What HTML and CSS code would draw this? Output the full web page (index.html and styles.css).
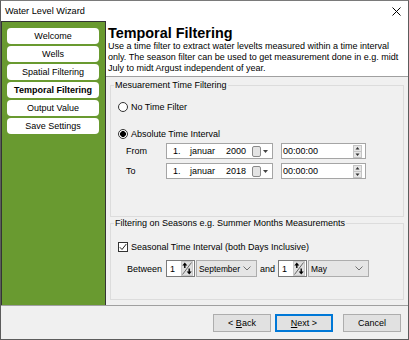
FILE: index.html
```html
<!DOCTYPE html>
<html lang="en">
<head>
    <meta charset="UTF-8">
    <title>Water Level Wizard</title>
    <link rel="stylesheet" href="styles.css">
</head>
<body>

    <div class="window">
        <div class="titlebar">
            <span>Water Level Wizard</span>
            <svg class="close" width="9" height="9" viewBox="0 0 9 9"><path d="M0.5 0.5L8.5 8.5M8.5 0.5L0.5 8.5" stroke="#000" stroke-width="1"/></svg>
        </div>

        <div class="main">
            <nav class="steps">
                <div class="step">Welcome</div>
                <div class="step">Wells</div>
                <div class="step">Spatial Filtering</div>
                <div class="step current">Temporal Filtering</div>
                <div class="step">Output Value</div>
                <div class="step">Save Settings</div>
            </nav>

            <section class="page">
                <header class="page-head">
                    <h1>Temporal Filtering</h1>
                    <p>Use a time filter to extract water levelts measured within a time interval<br>only. The season filter can be used to get measurement done in e.g. midt<br>July to midt Argust independent of year.</p>
                </header>

                <div class="page-body">
                    <fieldset class="group group-time">
                        <legend>Mesuarement Time Filtering</legend>
                        <div class="option first"><span class="radio"></span>No Time Filter</div>
                        <div class="option second"><span class="radio checked"></span>Absolute Time Interval</div>

                        <div class="range-row from">
                            <span class="row-label">From</span>
                            <div class="date-box">
                                <span class="d-day">1.</span><span class="d-month">januar</span><span class="d-year">2000</span>
                                <svg class="cal" width="16" height="11" viewBox="0 0 16 11"><rect x="0.5" y="0.5" width="8" height="10" rx="1.5" fill="#e4e4e4" stroke="#8a8a8a"/><path d="M11 4h5l-2.5 3z" fill="#444"/></svg>
                            </div>
                            <div class="time-box">
                                <span>00:00:00</span>
                                <svg class="spin" width="9" height="13" viewBox="0 0 9 13"><rect x="0.5" y="0.5" width="8" height="12" fill="#e6e6e6" stroke="#c4c4c4"/><path d="M0.5 6.5h8" stroke="#c4c4c4"/><path d="M2.5 4.5h4l-2-2.5z M2.5 8.5h4l-2 2.5z" fill="#333"/></svg>
                            </div>
                        </div>

                        <div class="range-row to">
                            <span class="row-label">To</span>
                            <div class="date-box">
                                <span class="d-day">1.</span><span class="d-month">januar</span><span class="d-year">2018</span>
                                <svg class="cal" width="16" height="11" viewBox="0 0 16 11"><rect x="0.5" y="0.5" width="8" height="10" rx="1.5" fill="#e4e4e4" stroke="#8a8a8a"/><path d="M11 4h5l-2.5 3z" fill="#444"/></svg>
                            </div>
                            <div class="time-box">
                                <span>00:00:00</span>
                                <svg class="spin" width="9" height="13" viewBox="0 0 9 13"><rect x="0.5" y="0.5" width="8" height="12" fill="#e6e6e6" stroke="#c4c4c4"/><path d="M0.5 6.5h8" stroke="#c4c4c4"/><path d="M2.5 4.5h4l-2-2.5z M2.5 8.5h4l-2 2.5z" fill="#333"/></svg>
                            </div>
                        </div>
                    </fieldset>

                    <fieldset class="group group-season">
                        <legend>Filtering on Seasons e.g. Summer Months Measurements</legend>
                        <div class="option check-row">
                            <span class="checkbox"><svg width="8" height="8" viewBox="0 0 8 8"><path d="M0.8 4.2L3 6.5L7.3 1" fill="none" stroke="#222" stroke-width="1"/></svg></span>Seasonal Time Interval (both Days Inclusive)
                        </div>
                        <div class="between-row">
                            <span class="row-label">Between</span>
                            <div class="num-box">
                                <span>1</span>
                                <svg width="12" height="15" viewBox="0 0 12 15"><rect x="0.5" y="0.5" width="11" height="14" fill="#dedede" stroke="#c8c8c8"/><path d="M1.5 13.5L10.5 1.5" stroke="#6a6a6a"/><path d="M1.3 4.5L3.8 1.5L6.3 4.5z" fill="#000"/><path d="M3.8 3.5v3.5" stroke="#000" stroke-width="1.4"/><path d="M5.7 10.5L8.2 13.5L10.7 10.5z" fill="#000"/><path d="M8.2 7.5v3.5" stroke="#000" stroke-width="1.4"/></svg>
                            </div>
                            <div class="combo wide">
                                <span>September</span>
                                <svg width="8" height="5" viewBox="0 0 8 5"><path d="M0.5 0.5L4 4L7.5 0.5" fill="none" stroke="#707070"/></svg>
                            </div>
                            <span class="and-label">and</span>
                            <div class="num-box">
                                <span>1</span>
                                <svg width="12" height="15" viewBox="0 0 12 15"><rect x="0.5" y="0.5" width="11" height="14" fill="#dedede" stroke="#c8c8c8"/><path d="M1.5 13.5L10.5 1.5" stroke="#6a6a6a"/><path d="M1.3 4.5L3.8 1.5L6.3 4.5z" fill="#000"/><path d="M3.8 3.5v3.5" stroke="#000" stroke-width="1.4"/><path d="M5.7 10.5L8.2 13.5L10.7 10.5z" fill="#000"/><path d="M8.2 7.5v3.5" stroke="#000" stroke-width="1.4"/></svg>
                            </div>
                            <div class="combo">
                                <span>May</span>
                                <svg width="8" height="5" viewBox="0 0 8 5"><path d="M0.5 0.5L4 4L7.5 0.5" fill="none" stroke="#707070"/></svg>
                            </div>
                        </div>
                    </fieldset>
                </div>
            </section>
        </div>

        <footer class="actions">
            <button class="btn">&lt; <u>B</u>ack</button>
            <button class="btn default"><u>N</u>ext &gt;</button>
            <button class="btn cancel">Cancel</button>
        </footer>
    </div>

</body>
</html>
```

FILE: styles.css
```css
* {
    box-sizing: border-box;
}

body {
    margin: 0;
    font-family: "Liberation Sans", Arial, sans-serif;
    font-size: 9px;
    color: #000;
    background: #fff;
}

.window {
    width: 409px;
    height: 340px;
    border: 1px solid #5c5c5c;
    border-top-color: #7a7a7a;
    background: #f0f0f0;
    display: flex;
    flex-direction: column;
}

/* title bar */
.titlebar {
    height: 20px;
    flex: none;
    background: #fff;
    display: flex;
    align-items: center;
    justify-content: space-between;
    padding: 0 7px 0 4px;
    font-size: 9.2px;
}

.close {
    display: block;
}

.main {
    height: 284px;
    flex: none;
    display: flex;
}

/* left step list */
.steps {
    width: 105px;
    flex: none;
    background: #699a30;
    border: 1px solid #343434;
    border-bottom: none;
    padding: 6px 0 0 5px;
}

.step {
    width: 92px;
    height: 16px;
    margin-bottom: 2px;
    background: #fff;
    border-radius: 4px;
    text-align: center;
    line-height: 16px;
    font-size: 9px;
}

.step.current {
    font-weight: bold;
}

/* right page */
.page {
    flex: 1;
    display: flex;
    flex-direction: column;
}

.page-head {
    height: 56px;
    background: #fff;
    padding: 4px 0 0 2px;
    border-bottom: 1px solid #a0a0a0;
}

.page-head h1 {
    margin: 0;
    font-size: 14.4px;
    line-height: 16px;
    font-weight: bold;
}

.page-head p {
    margin: 0;
    line-height: 11px;
}

.page-body {
    flex: 1;
    padding: 3px 4px 0 4px;
}

.group {
    margin: 0;
    padding: 0;
    border: 1px solid #dcdcdc;
    min-width: 0;
}

.group legend {
    margin-left: 3px;
    padding: 0 1px;
    line-height: 11px;
}

.group-time {
    padding-bottom: 37px;
}

.group-season {
    margin-top: 1px;
    padding-bottom: 22px;
}

.option {
    display: flex;
    align-items: center;
    height: 12px;
    margin-left: 7px;
}

.option.first {
    margin-top: 10px;
}

.option.second {
    margin-top: 15px;
}

.check-row {
    margin-top: 12px;
}

.radio {
    width: 10px;
    height: 10px;
    margin-right: 3px;
    border: 1px solid #333;
    border-radius: 50%;
    background: #fff;
}

.radio.checked {
    background: radial-gradient(circle, #000 0 2.6px, #fff 3.2px);
}

.checkbox {
    width: 10px;
    height: 10px;
    margin-right: 3px;
    border: 1px solid #333;
    background: #fff;
    display: flex;
    align-items: center;
    justify-content: center;
}

.checkbox svg {
    display: block;
}

/* from / to rows */
.range-row {
    display: flex;
    align-items: center;
    height: 16px;
    margin-left: 15px;
}

.range-row.from {
    margin-top: 3px;
}

.range-row.to {
    margin-top: 4px;
}

.row-label {
    width: 40px;
}

.date-box {
    width: 107px;
    height: 16px;
    background: #fff;
    border: 1px solid #a5a5a5;
    display: flex;
    align-items: center;
    padding-left: 6px;
}

.d-day {
    width: 17px;
}

.d-month {
    width: 36px;
}

.d-year {
    width: 26px;
}

.cal {
    display: block;
}

.time-box {
    width: 85px;
    height: 16px;
    margin-left: 8px;
    background: #fff;
    border: 1px solid #a5a5a5;
    display: flex;
    align-items: center;
    justify-content: space-between;
    padding: 0 3px 0 1px;
}

.spin {
    display: block;
}

/* season row */
.between-row {
    display: flex;
    align-items: center;
    height: 17px;
    margin: 7px 0 0 16px;
}

.between-row .row-label {
    width: 39px;
}

.num-box {
    width: 29px;
    height: 17px;
    background: #fff;
    border: 1px solid #7a7a7a;
    display: flex;
    align-items: center;
    justify-content: space-between;
    padding: 0 1px 0 3px;
}

.num-box svg {
    display: block;
}

.combo {
    width: 61px;
    height: 17px;
    margin-left: 1px;
    background: #e5e5e5;
    border: 1px solid #adadad;
    display: flex;
    align-items: center;
    justify-content: space-between;
    padding: 0 5px 0 2px;
    font-size: 8.4px;
}

.and-label {
    margin: 0 3px;
}

/* bottom buttons */
.actions {
    flex: 1;
    border-top: 1px solid #a0a0a0;
    display: flex;
    justify-content: flex-end;
    align-items: flex-start;
    padding: 8px 7px 0 0;
}

.btn {
    width: 58px;
    height: 18px;
    padding: 0;
    font-family: inherit;
    font-size: 9px;
    color: #000;
    background: #e1e1e1;
    border: 1px solid #adadad;
}

.btn.default {
    margin-left: 4px;
    border-color: #0078d7;
    box-shadow: inset 0 0 0 1px #0078d7;
}

.btn.cancel {
    margin-left: 10px;
}
```
